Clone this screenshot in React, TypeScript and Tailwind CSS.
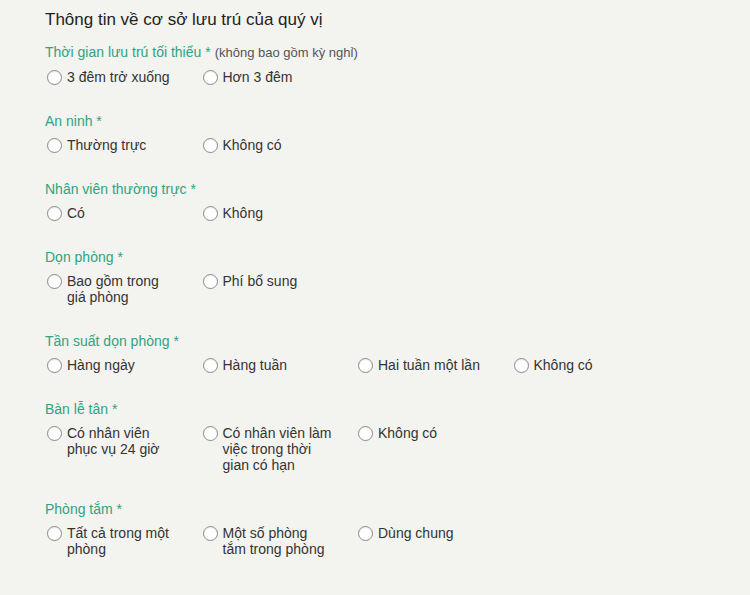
import React from "react";

type Section = { label: string; note?: string; options: string[] };

const sections: Section[] = [
  { label: "Thời gian lưu trú tối thiểu *", note: "(không bao gồm kỳ nghỉ)", options: ["3 đêm trở xuống", "Hơn 3 đêm"] },
  { label: "An ninh *", options: ["Thường trực", "Không có"] },
  { label: "Nhân viên thường trực *", options: ["Có", "Không"] },
  { label: "Dọn phòng *", options: ["Bao gồm trong giá phòng", "Phí bổ sung"] },
  { label: "Tần suất dọn phòng *", options: ["Hàng ngày", "Hàng tuần", "Hai tuần một lần", "Không có"] },
  { label: "Bàn lễ tân *", options: ["Có nhân viên phục vụ 24 giờ", "Có nhân viên làm việc trong thời gian có hạn", "Không có"] },
  { label: "Phòng tắm *", options: ["Tất cả trong một phòng", "Một số phòng tắm trong phòng", "Dùng chung"] },
];

function Radio({ text }: { text: string }) {
  return (
    <label className="flex items-start w-[155.5px] shrink-0 cursor-pointer">
      <span className="mt-[1px] ml-[2px] w-[15px] h-[15px] rounded-full border border-[#8a8a8a] bg-white shrink-0 shadow-[inset_0_1px_1px_rgba(0,0,0,0.08)]" />
      <span className="ml-[5px] w-[112px] text-[14px] leading-[16px] text-[#333333]">{text}</span>
    </label>
  );
}

export default function App() {
  return (
    <div
      className="w-[750px] h-[595px] bg-[#f3f3ef] pl-[45px] pt-[9px] overflow-hidden"
      style={{ fontFamily: '"Liberation Sans", Arial, sans-serif' }}
    >
      <h1 className="text-[17px] leading-[22px] text-[#222222]">Thông tin về cơ sở lưu trú của quý vị</h1>
      <div className="mt-[13px] flex flex-col gap-[28px]">
        {sections.map((s) => (
          <div key={s.label}>
            <div className="text-[14px] leading-[16px] text-[#2fa383]">
              {s.label}
              {s.note && <span className="ml-[4px] text-[13px] text-[#555555]">{s.note}</span>}
            </div>
            <div className="mt-[8px] flex">
              {s.options.map((o) => (
                <Radio key={o} text={o} />
              ))}
            </div>
          </div>
        ))}
      </div>
    </div>
  );
}
